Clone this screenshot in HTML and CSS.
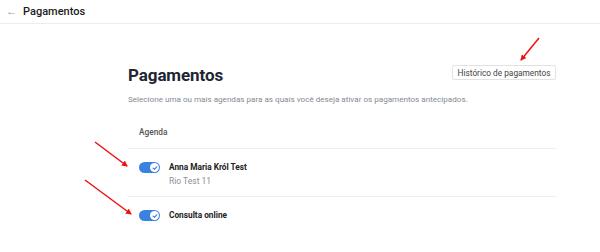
FILE: index.html
```html
<!DOCTYPE html>
<html lang="pt">
<head>
<meta charset="utf-8">
<link rel="stylesheet" href="styles.css">
</head>
<body>
<header class="topbar">
  <span class="back">&#8592;</span>
  <span class="topbar-title">Pagamentos</span>
</header>
<main class="content">
  <div class="title-row">
    <h1 class="title">Pagamentos</h1>
    <button class="history-btn">Histórico de pagamentos</button>
  </div>
  <p class="subtitle">Selecione uma ou mais agendas para as quais você deseja ativar os pagamentos antecipados.</p>
  <div class="table-head">Agenda</div>
  <div class="row">
    <span class="toggle"><span class="knob"><svg viewBox="0 0 10 10" width="8" height="8"><path d="M2.6 5.2 L4.3 6.8 L7.4 3.4" fill="none" stroke="#3b82e0" stroke-width="1.4" stroke-linecap="round" stroke-linejoin="round"/></svg></span></span>
    <div class="row-text">
      <div class="row-name">Anna Maria Król Test</div>
      <div class="row-sub">Rio Test 11</div>
    </div>
  </div>
  <div class="row row-last">
    <span class="toggle"><span class="knob"><svg viewBox="0 0 10 10" width="8" height="8"><path d="M2.6 5.2 L4.3 6.8 L7.4 3.4" fill="none" stroke="#3b82e0" stroke-width="1.4" stroke-linecap="round" stroke-linejoin="round"/></svg></span></span>
    <div class="row-text">
      <div class="row-name">Consulta online</div>
    </div>
  </div>
</main>
<svg class="arrows" width="600" height="252" viewBox="0 0 600 252">
  <defs>
    <marker id="head" markerWidth="6" markerHeight="6" refX="5" refY="3" orient="auto" markerUnits="userSpaceOnUse">
      <path d="M0 0 L6 3 L0 6 Z" fill="#f01010"/>
    </marker>
  </defs>
  <line x1="539" y1="38" x2="521" y2="60" stroke="#f01010" stroke-width="1.5" marker-end="url(#head)"/>
  <line x1="95" y1="142" x2="127" y2="166" stroke="#f01010" stroke-width="1.5" marker-end="url(#head)"/>
  <line x1="85" y1="180" x2="131" y2="214" stroke="#f01010" stroke-width="1.5" marker-end="url(#head)"/>
</svg>
</body>
</html>
```
FILE: styles.css
```css
* { box-sizing: border-box; }
html, body { margin: 0; padding: 0; background: #fff; }
body {
  font-family: Roboto, "Liberation Sans", sans-serif;
  width: 600px;
  height: 252px;
  position: relative;
  overflow: hidden;
  color: #222;
}
.topbar {
  height: 24px;
  border-bottom: 1px solid #ececec;
  display: flex;
  align-items: center;
  padding-left: 6px;
  gap: 6px;
}
.back {
  color: #9a9a9a;
  font-size: 11px;
  line-height: 1;
}
.topbar-title {
  font-size: 11px;
  font-weight: 500;
  color: #1c1c1c;
}
.content {
  width: 428px;
  margin-left: 128px;
  padding-top: 41px;
}
.title-row {
  display: flex;
  justify-content: space-between;
  align-items: flex-start;
}
.title {
  margin: 0;
  font-size: 17px;
  font-weight: 700;
  line-height: 20px;
  color: #1e2633;
  letter-spacing: -0.1px;
}
.history-btn {
  font-family: Roboto, "Liberation Sans", sans-serif;
  margin-top: 0;
  height: 15px;
  width: 104px;
  padding: 0;
  font-size: 8.3px;
  color: #444;
  background: #fff;
  border: 1px solid #e2e2e2;
  border-radius: 2px;
}
.subtitle {
  margin: 9px 0 0;
  font-size: 8.1px;
  line-height: 10px;
  color: #838a93;
}
.table-head {
  margin-top: 23px;
  padding-left: 11px;
  font-size: 8.3px;
  font-weight: 500;
  color: #555;
  height: 22px;
  border-bottom: 1px solid #efefef;
}
.row {
  display: flex;
  align-items: flex-start;
  gap: 9px;
  padding: 13px 0 0 11px;
  height: 48px;
  border-bottom: 1px solid #efefef;
}
.row-last { border-bottom: none; }
.toggle {
  width: 21px;
  height: 11px;
  border-radius: 6px;
  background: #3b82e0;
  display: flex;
  align-items: center;
  justify-content: flex-end;
  padding-right: 1px;
  flex-shrink: 0;
}
.knob {
  width: 9px;
  height: 9px;
  border-radius: 50%;
  background: #fff;
  display: flex;
  align-items: center;
  justify-content: center;
}
.row-name {
  font-size: 8.3px;
  font-weight: 700;
  color: #222;
  line-height: 11px;
}
.row-sub {
  margin-top: 3px;
  font-size: 8.5px;
  color: #8a9199;
  line-height: 11px;
}
.arrows {
  position: absolute;
  left: 0;
  top: 0;
  pointer-events: none;
}
```
